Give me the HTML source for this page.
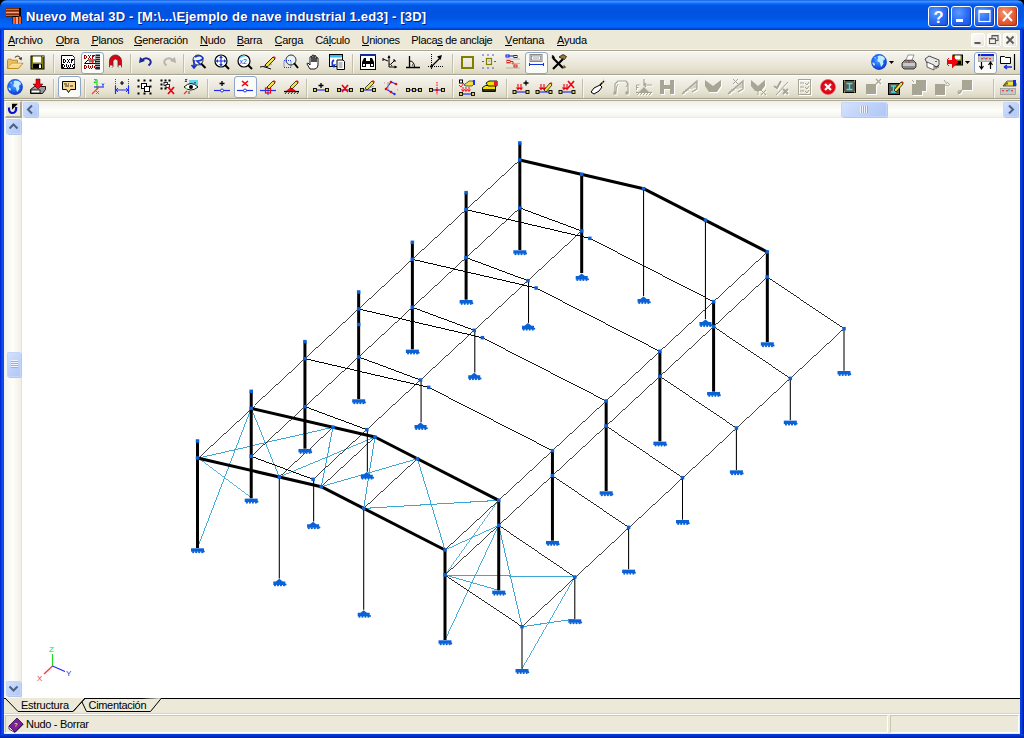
<!DOCTYPE html>
<html><head><meta charset="utf-8">
<style>
*{margin:0;padding:0;box-sizing:border-box}
html,body{width:1024px;height:738px;overflow:hidden;background:#ECE9D8;font-family:"Liberation Sans",sans-serif;font-size:11px;color:#000}

.abs{position:absolute}
#title{left:0;top:0;width:1024px;height:30px;border-radius:7px 7px 0 0;
 background:linear-gradient(to bottom,#0A48DA 0px,#3D94FF 1px,#3A8DFF 2px,#1876FF 3px,#0963F4 4px,#005BE9 5px,#0055E3 7px,#0053DF 12px,#0054E1 17px,#0059E9 19px,#0061F4 22px,#0066FB 25px,#0064F8 27px,#0055E6 28px,#003DCB 29px,#003DCB 30px)}
#ttext{left:26px;top:9px;color:#fff;font-weight:bold;font-size:13px;white-space:nowrap;text-shadow:1px 1px 0 #0A1E8A;letter-spacing:0.18px}
.bord{background:linear-gradient(to right,#0019CF,#0841E8 40%,#0A55F5 75%,#0842E0)}
#menu{left:4px;top:30px;width:1016px;height:20px;background:#ECE9D8}
.mi{position:absolute;top:4px;white-space:nowrap;font-size:11px;letter-spacing:-0.3px}
.mi u{text-decoration:none;border-bottom:1px solid #000;line-height:10px;display:inline-block}
.tb{position:absolute;left:4px;width:1016px;background:linear-gradient(to bottom,#F6F5EF 0px,#F1EFE6 5px,#EBE8DA 11px,#E4E1CF 17px,#DAD6C2 21px,#D2CEBA 22px)}
.sep{position:absolute;width:2px;height:19px;border-left:1px solid #C2BFAD;border-right:1px solid #F6F5EF}
.btnp{position:absolute;width:23px;height:22px;border:1px solid #8FA6C8;border-radius:3px;background:#FBFBF8}
.ico{position:absolute;width:16px;height:16px;overflow:visible}
#canvas{left:22px;top:118px;width:998px;height:580px;background:#fff}
#vscroll{left:4px;top:117px;width:18px;height:581px;background:linear-gradient(to right,#F3F1EC,#FEFEFB 50%,#F1EFE6);border-right:1px solid #E6E3D6}
#hscroll{left:22px;top:101px;width:998px;height:17px;background:linear-gradient(to bottom,#EFEEE7,#F8F7F2 30%,#FEFEFB 55%,#F5F4EE 90%,#EAE8DD)}
.sbtn{position:absolute;width:15px;height:15px;border-radius:2px;background:linear-gradient(135deg,#D6E3FC,#BCD0F8 60%,#AFC6F5);box-shadow:inset 0 0 0 1px #C5D6FB,1px 1px 0 #B7C8E6}
#tabs{left:4px;top:698px;width:1016px;height:16px;background:#ECE9D8;border-top:1px solid #000}
#status{left:4px;top:714px;width:1016px;height:20px;background:#ECE9D8}

.tbtn{width:21px;height:21px;border:1px solid #fff;border-radius:3px;background:radial-gradient(circle at 35% 30%,#5C9CFF,#2A6AF4 50%,#1452E0);box-shadow:inset -1px -1px 1px #0A3AB8}
.tbtn svg{position:absolute;left:-1px;top:-1px}
.cls{background:radial-gradient(circle at 35% 30%,#F09A78,#E25A32 55%,#C8401E);box-shadow:inset -1px -1px 1px #A03010}
.mdib{width:14px;height:14px;border:1px solid #fff;border-radius:2px;background:linear-gradient(135deg,#FDFDFB,#F2F1EA 60%,#E5E3D8)}
.mdib svg{position:absolute;left:-1px;top:-1px}
.sbtn svg{position:absolute;left:0;top:0}
.spanel{border-top:1px solid #CBC7B6;border-left:1px solid #CBC7B6;border-bottom:1px solid #FFF;border-right:1px solid #FFF}
svg text{font-family:"Liberation Sans",sans-serif}
.thk{stroke:#000;stroke-width:3}
.thn{stroke:#000;stroke-width:1;shape-rendering:crispEdges}
.gry{stroke:#6E6E6E;stroke-width:2}
.gr2{stroke:#3A3A3A;stroke-width:1.4}
.gr3{stroke:#505050;stroke-width:1.5}
.col{stroke:#000;stroke-width:1.05}
.brc{stroke:#3AA6D6;stroke-width:1;shape-rendering:crispEdges}
.nd{fill:#0A62D6}
.bs{fill:#0A62D6}
</style></head><body>
<div class="abs bord" style="left:0;top:0;width:4px;height:738px"></div>
<div class="abs bord" style="left:1020px;top:0;width:4px;height:738px;background:linear-gradient(to right,#0842E0,#0A3CD8 40%,#0024B8 75%,#001A9C)"></div>
<div class="abs" style="left:0;top:734px;width:1024px;height:4px;background:linear-gradient(to bottom,#0842E0,#0030C8 50%,#001EA8)"></div>
<div class="abs" style="left:0;top:0;width:1024px;height:8px;background:#000"></div>
<div id="title" class="abs"></div>
<div id="ttext" class="abs">Nuevo Metal 3D - [M:\...\Ejemplo de nave industrial 1.ed3] - [3D]</div>
<div id="menu" class="abs">
<div class="mi" style="left:4.0px"><u>A</u>rchivo</div>
<div class="mi" style="left:51.7px"><u>O</u>bra</div>
<div class="mi" style="left:87.4px"><u>P</u>lanos</div>
<div class="mi" style="left:129.9px"><u>G</u>eneración</div>
<div class="mi" style="left:196.1px"><u>N</u>udo</div>
<div class="mi" style="left:232.7px"><u>B</u>arra</div>
<div class="mi" style="left:270.5px"><u>C</u>arga</div>
<div class="mi" style="left:311.2px">Cá<u>l</u>culo</div>
<div class="mi" style="left:357.5px"><u>U</u>niones</div>
<div class="mi" style="left:407.3px">Placa<u>s</u> de anclaje</div>
<div class="mi" style="left:501.1px"><u>V</u>entana</div>
<div class="mi" style="left:553.0px"><u>A</u>yuda</div>
</div>
<div class="abs" style="left:4px;top:49px;width:1016px;height:1px;background:#F5F4EE"></div>
<div class="abs" style="left:4px;top:50px;width:1016px;height:1px;background:#A8A592"></div>
<div class="abs" style="left:4px;top:51px;width:1016px;height:1px;background:#FFFFFF"></div>
<div class="tb" style="top:52px;height:22px"></div>
<div class="abs" style="left:4px;top:74px;width:1016px;height:1px;background:#A8A592"></div>
<div class="abs" style="left:4px;top:75px;width:1016px;height:1px;background:#FFFFFF"></div>
<div class="tb" style="top:76px;height:22px"></div>
<div class="abs" style="left:4px;top:98px;width:1016px;height:1px;background:#A8A592"></div>
<div class="abs" style="left:4px;top:99px;width:1016px;height:1px;background:#F0EEE5"></div>
<div class="abs" style="left:4px;top:100px;width:1016px;height:1px;background:#AEAA95"></div>
<div id="hscroll" class="abs"></div>
<div id="vscroll" class="abs"></div>
<div id="canvas" class="abs"></div>
<div id="tabs" class="abs"></div>
<div id="status" class="abs"></div>

<!-- title icon -->
<svg class="abs" style="left:6px;top:8px" width="16" height="16" viewBox="0 0 16 16">
<rect x="0" y="0" width="15" height="9" fill="#000"/>
<rect x="0" y="0.5" width="13" height="2" fill="#FF5A10"/><rect x="0" y="3.5" width="13" height="2" fill="#FFA080"/><rect x="0" y="6.5" width="13" height="1.8" fill="#FF5A10"/>
<rect x="6.5" y="8" width="9" height="8" fill="#000"/>
<rect x="7" y="9" width="2" height="7" fill="#FF5A10"/><rect x="9.5" y="9" width="2.5" height="7" fill="#FFA080"/><rect x="12.5" y="8.5" width="2.5" height="7.5" fill="#FF5A10"/>
</svg>
<!-- title buttons -->
<div class="abs tbtn" style="left:928px;top:6px"><svg width="21" height="21" viewBox="0 0 21 21"><text x="5.5" y="17" font-size="16.5" font-weight="bold" fill="#fff" font-family="Liberation Sans">?</text></svg></div>
<div class="abs tbtn" style="left:951px;top:6px"><svg width="21" height="21" viewBox="0 0 21 21"><rect x="5" y="13" width="7" height="3" fill="#fff"/></svg></div>
<div class="abs tbtn" style="left:974px;top:6px"><svg width="21" height="21" viewBox="0 0 21 21"><rect x="5" y="4.5" width="11" height="11" fill="none" stroke="#fff" stroke-width="1.2"/><rect x="5" y="4" width="11" height="3" fill="#fff"/></svg></div>
<div class="abs tbtn cls" style="left:997px;top:6px"><svg width="21" height="21" viewBox="0 0 21 21"><path d="M6 5l9 10M15 5l-9 10" stroke="#fff" stroke-width="2"/></svg></div>
<!-- mdi buttons -->
<div class="abs mdib" style="left:971px;top:33px"><svg width="14" height="14" viewBox="0 0 14 14"><rect x="3.5" y="9" width="6" height="2" fill="#5A5A5A"/></svg></div>
<div class="abs mdib" style="left:987px;top:33px"><svg width="14" height="14" viewBox="0 0 14 14"><rect x="5" y="2.5" width="6" height="5" fill="none" stroke="#5A5A5A" stroke-width="1.1"/><rect x="2.5" y="5.5" width="6" height="5" fill="#F2F1E9" stroke="#5A5A5A" stroke-width="1.1"/><rect x="5" y="2" width="6" height="1.4" fill="#5A5A5A"/><rect x="2.5" y="5" width="6" height="1.4" fill="#5A5A5A"/></svg></div>
<div class="abs mdib" style="left:1003px;top:33px"><svg width="14" height="14" viewBox="0 0 14 14"><path d="M3.5 3.5l7 7M10.5 3.5l-7 7" stroke="#5A5A5A" stroke-width="1.8"/></svg></div>
<!-- corner button -->
<div class="abs" style="left:5px;top:101px;width:17px;height:17px;background:#ECE9D8;border-right:2px solid #ACA899;border-bottom:2px solid #ACA899;border-top:1px solid #FFF;border-left:1px solid #FFF"></div>
<svg class="abs" style="left:4px;top:100px" width="20" height="20" viewBox="0 0 20 20"><path d="M5 7.5Q4.6 13 8.6 13Q12.4 13 12.2 7" fill="none" stroke="#0010D8" stroke-width="2.2"/><path d="M8 3.8H13.9L8 9.8Z" fill="#000"/></svg>
<!-- scroll buttons -->
<div class="sbtn" style="left:23px;top:102px"><svg width="15" height="15" viewBox="0 0 15 15"><path d="M9 3.5l-4 4l4 4" fill="none" stroke="#4D6185" stroke-width="2"/></svg></div>
<div class="sbtn" style="left:1003px;top:102px"><svg width="15" height="15" viewBox="0 0 15 15"><path d="M6 3.5l4 4l-4 4" fill="none" stroke="#4D6185" stroke-width="2"/></svg></div>
<div class="sbtn" style="left:841px;top:102px;width:46px"><svg width="46" height="15" viewBox="0 0 46 15"><path d="M19.5 4v7M21.5 4v7M23.5 4v7M25.5 4v7" stroke="#EEF3FD" stroke-width="1"/><path d="M20.5 4v7M22.5 4v7M24.5 4v7M26.5 4v7" stroke="#8FB0F0" stroke-width="1"/></svg></div>
<div class="sbtn" style="left:6px;top:119px"><svg width="15" height="15" viewBox="0 0 15 15"><path d="M3.5 9.5l4-4l4 4" fill="none" stroke="#4D6185" stroke-width="2"/></svg></div>
<div class="sbtn" style="left:6px;top:681px"><svg width="15" height="15" viewBox="0 0 15 15"><path d="M3.5 5.5l4 4l4-4" fill="none" stroke="#4D6185" stroke-width="2"/></svg></div>
<div class="sbtn" style="left:7px;top:352px;width:14px;height:25px"><svg width="14" height="25" viewBox="0 0 14 25"><path d="M4 8.5h7M4 10.5h7M4 12.5h7M4 14.5h7" stroke="#EEF3FD"/><path d="M4 9.5h7M4 11.5h7M4 13.5h7M4 15.5h7" stroke="#8FB0F0"/></svg></div>
<!-- tabs -->
<svg class="abs" style="left:4px;top:697px" width="200" height="17" viewBox="0 0 200 17">
<path d="M1 1l13 13.5h55l12-13.5" fill="#ECE9D8" stroke="#000" stroke-width="1"/>
<path d="M78 5l4.5 9.5h64l11-13.5" fill="#ECE9D8" stroke="#000" stroke-width="1"/>
<path d="M69 14.5l12.5-13.5" fill="none" stroke="#000" stroke-width="1"/>
<text x="17" y="12" font-size="11" fill="#000" font-family="Liberation Sans" textLength="48">Estructura</text>
<text x="84.5" y="12" font-size="11" fill="#000" font-family="Liberation Sans" textLength="58">Cimentación</text>
</svg>
<!-- status bar -->
<div class="abs" style="left:4px;top:713px;width:1016px;height:1px;background:#D8D4C4"></div>
<div class="abs" style="left:4px;top:714px;width:1016px;height:1px;background:#FFFFFF"></div>
<div class="abs spanel" style="left:5px;top:715px;width:883px;height:18px"></div>
<div class="abs spanel" style="left:890px;top:715px;width:129px;height:18px"></div>
<svg class="abs" style="left:8px;top:717px" width="16" height="16" viewBox="0 0 16 16">
<path d="M1 9l8-8l6 6l-8 8z" fill="#7A1E9A" stroke="#2A0040" stroke-width="0.8"/>
<path d="M1 9v3l6 3.5l8-8v-0.5l-8 8z" fill="#fff" stroke="#2A0040" stroke-width="0.8"/>
<text x="6" y="9.5" font-size="6" font-weight="bold" fill="#F0E040" font-family="Liberation Sans">?</text>
</svg>
<div class="abs" style="left:26px;top:718px;font-size:11px;letter-spacing:-0.3px;white-space:nowrap">Nudo - Borrar</div>

<svg class="ico" style="left:7px;top:54px;width:16px;height:16px" viewBox="0 0 16 16"><path d="M0.5 14.5V6.2l0.8-1h2.8l0.8 1h5.5v8.3z" fill="#E8C060" stroke="#C08A20" stroke-width="1"/><path d="M0.8 14.5l4.2-5.2h11l-4.6 5.2z" fill="#F8DC88" stroke="#C08A20" stroke-width="1"/><path d="M1.5 13.5l3.8-3.5h9" fill="none" stroke="#FFF2C0" stroke-width="0.8"/><path d="M8 3.5q2.5-3 5 0" fill="none" stroke="#4A3010" stroke-width="1.1"/><path d="M11.5 4.5l3.5-1.5l-0.5 3.5z" fill="#4A3010"/></svg>
<svg class="ico" style="left:30px;top:54px;width:16px;height:16px" viewBox="0 0 16 16"><rect x="0.5" y="1.5" width="14" height="14" fill="#000"/><rect x="1.5" y="2.5" width="12" height="12" fill="#808000"/><rect x="3" y="2.5" width="8" height="6" fill="#fff"/><rect x="3" y="10" width="9" height="4.5" fill="#000"/><rect x="9" y="10.5" width="2" height="3.5" fill="#fff"/><rect x="12.5" y="2" width="1" height="1" fill="#fff"/></svg>
<div class="sep" style="left:53px;top:54px"></div>
<svg class="ico" style="left:61px;top:54px;width:16px;height:16px" viewBox="0 0 16 16"><path d="M0.5 1.5h11l2 2v11h-13z" fill="#fff" stroke="#000"/><path d="M13.5 3.5v11" stroke="#555" stroke-width="1"/><g fill="#000"><rect x="2.00" y="5.00" width="1.00" height="1.00"/><rect x="3.00" y="5.00" width="1.00" height="1.00"/><rect x="2.00" y="6.00" width="1.00" height="1.00"/><rect x="4.00" y="6.00" width="1.00" height="1.00"/><rect x="2.00" y="7.00" width="1.00" height="1.00"/><rect x="4.00" y="7.00" width="1.00" height="1.00"/><rect x="2.00" y="8.00" width="1.00" height="1.00"/><rect x="3.00" y="8.00" width="1.00" height="1.00"/><rect x="6.00" y="5.00" width="1.00" height="1.00"/><rect x="8.00" y="5.00" width="1.00" height="1.00"/><rect x="7.00" y="6.00" width="1.00" height="1.00"/><rect x="7.00" y="7.00" width="1.00" height="1.00"/><rect x="6.00" y="8.00" width="1.00" height="1.00"/><rect x="8.00" y="8.00" width="1.00" height="1.00"/><rect x="10.00" y="5.00" width="1.00" height="1.00"/><rect x="11.00" y="5.00" width="1.00" height="1.00"/><rect x="12.00" y="5.00" width="1.00" height="1.00"/><rect x="10.00" y="6.00" width="1.00" height="1.00"/><rect x="11.00" y="6.00" width="1.00" height="1.00"/><rect x="10.00" y="7.00" width="1.00" height="1.00"/><rect x="10.00" y="8.00" width="1.00" height="1.00"/></g><g fill="#000"><rect x="1.00" y="10.00" width="1.00" height="1.00"/><rect x="2.00" y="10.00" width="1.00" height="1.00"/><rect x="1.00" y="11.00" width="1.00" height="1.00"/><rect x="3.00" y="11.00" width="1.00" height="1.00"/><rect x="1.00" y="12.00" width="1.00" height="1.00"/><rect x="3.00" y="12.00" width="1.00" height="1.00"/><rect x="1.00" y="13.00" width="1.00" height="1.00"/><rect x="2.00" y="13.00" width="1.00" height="1.00"/><rect x="5.00" y="10.00" width="1.00" height="1.00"/><rect x="9.00" y="10.00" width="1.00" height="1.00"/><rect x="5.00" y="11.00" width="1.00" height="1.00"/><rect x="7.00" y="11.00" width="1.00" height="1.00"/><rect x="9.00" y="11.00" width="1.00" height="1.00"/><rect x="5.00" y="12.00" width="1.00" height="1.00"/><rect x="7.00" y="12.00" width="1.00" height="1.00"/><rect x="9.00" y="12.00" width="1.00" height="1.00"/><rect x="6.00" y="13.00" width="1.00" height="1.00"/><rect x="8.00" y="13.00" width="1.00" height="1.00"/><rect x="12.00" y="10.00" width="1.00" height="1.00"/><rect x="13.00" y="10.00" width="1.00" height="1.00"/><rect x="11.00" y="11.00" width="1.00" height="1.00"/><rect x="11.00" y="12.00" width="1.00" height="1.00"/><rect x="13.00" y="12.00" width="1.00" height="1.00"/><rect x="12.00" y="13.00" width="1.00" height="1.00"/><rect x="13.00" y="13.00" width="1.00" height="1.00"/></g></svg>
<div class="btnp" style="left:81px;top:52px"></div>
<svg class="ico" style="left:84px;top:54px;width:16px;height:16px" viewBox="0 0 16 16"><g fill="#A00000"><rect x="0.00" y="1.00" width="1.00" height="1.00"/><rect x="1.00" y="1.00" width="1.00" height="1.00"/><rect x="0.00" y="2.00" width="1.00" height="1.00"/><rect x="2.00" y="2.00" width="1.00" height="1.00"/><rect x="0.00" y="3.00" width="1.00" height="1.00"/><rect x="2.00" y="3.00" width="1.00" height="1.00"/><rect x="0.00" y="4.00" width="1.00" height="1.00"/><rect x="1.00" y="4.00" width="1.00" height="1.00"/><rect x="4.00" y="1.00" width="1.00" height="1.00"/><rect x="6.00" y="1.00" width="1.00" height="1.00"/><rect x="5.00" y="2.00" width="1.00" height="1.00"/><rect x="5.00" y="3.00" width="1.00" height="1.00"/><rect x="4.00" y="4.00" width="1.00" height="1.00"/><rect x="6.00" y="4.00" width="1.00" height="1.00"/><rect x="8.00" y="1.00" width="1.00" height="1.00"/><rect x="9.00" y="1.00" width="1.00" height="1.00"/><rect x="10.00" y="1.00" width="1.00" height="1.00"/><rect x="8.00" y="2.00" width="1.00" height="1.00"/><rect x="9.00" y="2.00" width="1.00" height="1.00"/><rect x="8.00" y="3.00" width="1.00" height="1.00"/><rect x="8.00" y="4.00" width="1.00" height="1.00"/></g><g fill="#A00000"><rect x="0.00" y="11.00" width="1.00" height="1.00"/><rect x="1.00" y="11.00" width="1.00" height="1.00"/><rect x="0.00" y="12.00" width="1.00" height="1.00"/><rect x="2.00" y="12.00" width="1.00" height="1.00"/><rect x="0.00" y="13.00" width="1.00" height="1.00"/><rect x="2.00" y="13.00" width="1.00" height="1.00"/><rect x="0.00" y="14.00" width="1.00" height="1.00"/><rect x="1.00" y="14.00" width="1.00" height="1.00"/><rect x="4.00" y="11.00" width="1.00" height="1.00"/><rect x="8.00" y="11.00" width="1.00" height="1.00"/><rect x="4.00" y="12.00" width="1.00" height="1.00"/><rect x="6.00" y="12.00" width="1.00" height="1.00"/><rect x="8.00" y="12.00" width="1.00" height="1.00"/><rect x="4.00" y="13.00" width="1.00" height="1.00"/><rect x="6.00" y="13.00" width="1.00" height="1.00"/><rect x="8.00" y="13.00" width="1.00" height="1.00"/><rect x="5.00" y="14.00" width="1.00" height="1.00"/><rect x="7.00" y="14.00" width="1.00" height="1.00"/><rect x="11.00" y="11.00" width="1.00" height="1.00"/><rect x="12.00" y="11.00" width="1.00" height="1.00"/><rect x="10.00" y="12.00" width="1.00" height="1.00"/><rect x="10.00" y="13.00" width="1.00" height="1.00"/><rect x="12.00" y="13.00" width="1.00" height="1.00"/><rect x="11.00" y="14.00" width="1.00" height="1.00"/><rect x="12.00" y="14.00" width="1.00" height="1.00"/></g><path d="M0.5 9.5l3.5-3.5h7.5v3.5z" fill="#fff" stroke="#000"/><path d="M5 7.8h4.5M8 6.5l1.5 1.3l-1.5 1.3" stroke="#E00" stroke-width="1" fill="none"/><rect x="11.5" y="0.5" width="4.5" height="15" fill="#222"/><path d="M11.5 2.5h4.5M11.5 4.5h4.5M11.5 6.5h4.5M11.5 8.5h4.5M11.5 10.5h4.5M11.5 12.5h4.5" stroke="#C8C8C8" stroke-width="0.8"/></svg>
<svg class="ico" style="left:108px;top:54px;width:16px;height:16px" viewBox="0 0 16 16"><path d="M1.5 13V7a6 6 0 0 1 12 0v6h-3.5V7.5a2.5 2.5 0 0 0-5 0V13z" fill="#E00010" stroke="#333" stroke-width="0.8"/><rect x="2" y="11.5" width="2.5" height="2" fill="#fff"/><rect x="10.5" y="11.5" width="2.5" height="2" fill="#fff"/></svg>
<div class="sep" style="left:130px;top:54px"></div>
<svg class="ico" style="left:138px;top:54px;width:16px;height:16px" viewBox="0 0 16 16"><path d="M3.5 6.5q4-4 8 -1q3 3 -1 6" fill="none" stroke="#1A2A9A" stroke-width="2"/><path d="M1 9l1-6l5 4z" fill="#1A2A9A"/></svg>
<svg class="ico" style="left:161px;top:54px;width:16px;height:16px" viewBox="0 0 16 16"><path d="M12.5 6.5q-4-4 -8 -1q-3 3 1 6" fill="none" stroke="#B8B4A8" stroke-width="2"/><path d="M15 9l-1-6l-5 4z" fill="#B8B4A8"/></svg>
<div class="sep" style="left:183px;top:54px"></div>
<svg class="ico" style="left:191px;top:54px;width:16px;height:16px" viewBox="0 0 16 16"><circle cx="7" cy="6" r="5" fill="#E8F4FA" stroke="#333"/><path d="M10 9.5l4.5 4.5" stroke="#000" stroke-width="2"/><path d="M4 3q6-3 8 1q-1 3-6 3l4 4" fill="none" stroke="#1430C8" stroke-width="1.6"/><path d="M3 6v8M0.5 11l2.5 3l2.5-3" fill="none" stroke="#1430C8" stroke-width="1.6"/></svg>
<svg class="ico" style="left:214px;top:54px;width:16px;height:16px" viewBox="0 0 16 16"><circle cx="7" cy="7" r="6" fill="#fff" stroke="#000" stroke-width="1.2"/><path d="M11 11l4 4" stroke="#000" stroke-width="2"/><path d="M7 2v10M2 7h10" stroke="#1838D8" stroke-width="1.2"/><path d="M7 2l-2 2h4zM7 12l-2-2h4zM2 7l2-2v4zM12 7l-2-2v4z" fill="#1838D8"/></svg>
<svg class="ico" style="left:237px;top:54px;width:16px;height:16px" viewBox="0 0 16 16"><circle cx="7" cy="7" r="6" fill="#fff" stroke="#000" stroke-width="1.2"/><path d="M11 11l4 4" stroke="#000" stroke-width="2"/><path d="M3 4a5 5 0 0 1 5-2" stroke="#5AD8F0" stroke-width="1.5" fill="none"/><text x="2.5" y="10" font-size="7" fill="#1838D8" font-family="Liberation Sans">x2</text></svg>
<svg class="ico" style="left:260px;top:54px;width:16px;height:16px" viewBox="0 0 16 16"><path d="M5 11l8-8l2 2l-8 8z" fill="#F0E040" stroke="#000" stroke-width="0.8"/><path d="M13 3l1-1l2 2l-1 1z" fill="#E02020"/><path d="M5 11l-1 2l2-1z" fill="#000"/><path d="M0 13q3-1 5 0q3 1 6 2" fill="none" stroke="#000" stroke-width="1"/><path d="M8 12l4-2" stroke="#999" stroke-width="1"/></svg>
<svg class="ico" style="left:283px;top:54px;width:16px;height:16px" viewBox="0 0 16 16"><circle cx="8" cy="6" r="5" fill="#E8F4FA" stroke="#333"/><path d="M11 9l4 5" stroke="#000" stroke-width="2"/><rect x="1" y="6.5" width="7" height="7" fill="none" stroke="#2040E0" stroke-dasharray="1 1"/></svg>
<svg class="ico" style="left:306px;top:54px;width:16px;height:16px" viewBox="0 0 16 16"><path d="M4 15l-3-5q0-1 1-1l2 2V3q1-1 2 0v5V1.5q1-1 2 0V8V2q1-1 2 0v6V4q1-1 2 0v7q0 3-3 4z" fill="#fff" stroke="#000" stroke-width="0.9"/></svg>
<svg class="ico" style="left:329px;top:54px;width:16px;height:16px" viewBox="0 0 16 16"><rect x="0.5" y="0.5" width="13" height="12" fill="#fff" stroke="#000"/><rect x="1" y="1" width="12" height="2.5" fill="#3AC0E8"/><path d="M8 6h6l1.5 1.5v8h-7.5z" fill="#fff" stroke="#000"/><path d="M9.5 9h4M9.5 11h4M9.5 13h4" stroke="#444" stroke-width="0.7"/><path d="M5 6q-3 2 -1 6" fill="none" stroke="#1030D0" stroke-width="1.6"/><path d="M2 11l3 3l2-4z" fill="#1030D0"/></svg>
<div class="sep" style="left:352px;top:54px"></div>
<svg class="ico" style="left:360px;top:54px;width:16px;height:16px" viewBox="0 0 16 16"><rect x="0.5" y="0.5" width="15" height="15" fill="#fff" stroke="#000"/><rect x="0" y="0" width="16" height="2" fill="#1030A0"/><path d="M2 13v-5l2-4h2v3h4v-3h2l2 4v5h-4v-3h-4v3z" fill="#000"/><rect x="3" y="10" width="2" height="2" fill="#fff"/><rect x="11" y="10" width="2" height="2" fill="#fff"/></svg>
<svg class="ico" style="left:382px;top:54px;width:16px;height:16px" viewBox="0 0 16 16"><path d="M7 2v11h7" fill="none" stroke="#000" stroke-width="1"/><path d="M5.5 4l1.5-3l1.5 3zM12.5 11.5l3 1.5l-3 1.5z" fill="#000"/><path d="M6 7l-5-2M1 4v3" stroke="#000" stroke-width="1" fill="none"/><path d="M9 10l4-4M11 6h2v2" stroke="#000" stroke-width="1" fill="none"/><path d="M7 10q2 0 3 2" fill="none" stroke="#000" stroke-width="0.8"/></svg>
<svg class="ico" style="left:406px;top:54px;width:16px;height:16px" viewBox="0 0 16 16"><path d="M0 13.5h14M3.5 13.5V2" stroke="#000" stroke-width="1.3" fill="none"/><path d="M3.5 7q5 0 5 6.5" fill="none" stroke="#000" stroke-width="1"/><rect x="6" y="10.5" width="1" height="1" fill="#000"/></svg>
<svg class="ico" style="left:428px;top:54px;width:16px;height:16px" viewBox="0 0 16 16"><path d="M3.5 0v16M0 12.5h16" stroke="#000" stroke-width="1" stroke-dasharray="1 1"/><path d="M3.5 12.5l9-9" stroke="#000" stroke-width="1.2"/><path d="M14 1l-5 1.5l3.5 3.5z" fill="#000"/><circle cx="3.5" cy="12.5" r="1.3" fill="#000"/></svg>
<div class="sep" style="left:452px;top:54px"></div>
<svg class="ico" style="left:459px;top:54px;width:16px;height:16px" viewBox="0 0 16 16"><rect x="3" y="3" width="11" height="11" fill="none" stroke="#808000" stroke-width="2"/></svg>
<svg class="ico" style="left:482px;top:54px;width:16px;height:16px" viewBox="0 0 16 16"><path d="M0 1h2M5 1h2M10 1h2M0 7.5h2M12 7.5h2M0 14h2M5 14h2M10 14h2" stroke="#4040E0" stroke-width="0.9"/><rect x="4.5" y="4.5" width="5" height="6" fill="none" stroke="#808000" stroke-width="1.2"/><rect x="6.5" y="6.5" width="1" height="1" fill="#4040E0"/></svg>
<svg class="ico" style="left:505px;top:54px;width:16px;height:16px" viewBox="0 0 16 16"><rect x="1" y="1" width="3" height="2" fill="none" stroke="#0020E0"/><rect x="9" y="1.5" width="3" height="2" fill="none" stroke="#0020E0"/><path d="M4 2h5" stroke="#0020E0"/><path d="M1 5h14M1 9.5h14M1 14h14" stroke="#999" stroke-width="0.6"/><rect x="2" y="6.5" width="3" height="2" fill="none" stroke="#E02020"/><path d="M5 7.5h3v3" fill="none" stroke="#E02020"/><rect x="9" y="11" width="3" height="2" fill="none" stroke="#E02020"/></svg>
<div class="btnp" style="left:525px;top:52px"></div>
<svg class="ico" style="left:529px;top:54px;width:16px;height:16px" viewBox="0 0 16 16"><rect x="1" y="0.5" width="12" height="7" fill="#DDD" stroke="#888"/><rect x="2.5" y="2" width="9" height="4" fill="#fff" stroke="#666" stroke-width="0.6"/><path d="M4 4h6" stroke="#666" stroke-width="0.6"/><path d="M0.5 10.5h14M0.5 9v3M14.5 9v3" stroke="#1030D8" stroke-width="1"/></svg>
<svg class="ico" style="left:551px;top:54px;width:16px;height:16px" viewBox="0 0 16 16"><path d="M2 15l10-10" stroke="#000" stroke-width="2.2"/><path d="M2 4l10 10" stroke="#000" stroke-width="2.2"/><path d="M12 14l2-1l-1.5-1.5" fill="none" stroke="#8a4a20" stroke-width="1.5"/><path d="M1 1.5l2.5 2.5M1 4l2-2" stroke="#000" stroke-width="1.4"/><path d="M8 3l4-2.5l3.5 2l-2 3l-1.5-0.5z" fill="#A07830" stroke="#000" stroke-width="0.7"/></svg>
<svg class="ico" style="left:871px;top:54px;width:16px;height:16px" viewBox="0 0 16 16"><defs><radialGradient id="gl" cx="0.45" cy="0.4" r="0.65"><stop offset="0" stop-color="#58A8FF"/><stop offset="0.55" stop-color="#1C64F0"/><stop offset="1" stop-color="#0830C0"/></radialGradient></defs><circle cx="8" cy="8" r="7.9" fill="url(#gl)"/><path d="M6.5 2.2l2-0.8l3 0.5l2 1.5l0.5 2l-1.5 0.5l-0.5 2l0.5 1.5l-1.5 2.5l-1 1l-0.5-2l-0.7-2.5l-2-0.8l-0.5-1.5l1-1.5z" fill="#C0ECFF"/><path d="M1.2 8.5l1.6 0.2l1.2 1.3l-0.3 1.5l-1.4-0.3z" fill="#C0ECFF"/><path d="M3 3.5l1.2-0.6l0.8 1l-0.8 0.8z" fill="#A8DCFF"/></svg>
<svg class="ico" style="left:889px;top:61px;width:5px;height:3px" viewBox="0 0 5 3"><path d="M0 0h5l-2.5 3z" fill="#000"/></svg>
<svg class="ico" style="left:901px;top:54px;width:16px;height:16px" viewBox="0 0 16 16"><path d="M1 9l3-3h8l3 3v4l-2 2h-10l-2-2z" fill="#8a8a8a" stroke="#222" stroke-width="0.8"/><path d="M2 9h12v3h-12z" fill="#C8C8C8"/><path d="M5 6l2-5h6l-2 5z" fill="#fff" stroke="#555" stroke-width="0.6"/><rect x="4" y="7" width="2" height="1" fill="#20C020"/><rect x="7" y="7.5" width="2" height="1" fill="#E02020"/></svg>
<svg class="ico" style="left:924px;top:54px;width:16px;height:16px" viewBox="0 0 16 16"><path d="M1 5l4-3l10 4v5l-2 2l-10-4z" fill="#E8E8E8" stroke="#222" stroke-width="0.8"/><path d="M3 8v5l7 3v-5z" fill="#fff" stroke="#222" stroke-width="0.7"/><rect x="11" y="7" width="2" height="1" fill="#20A020"/><path d="M12 12v3M14 11v3" stroke="#222" stroke-width="0.8"/></svg>
<svg class="ico" style="left:947px;top:54px;width:16px;height:16px" viewBox="0 0 16 16"><rect x="5.5" y="0.5" width="10.5" height="11" fill="#000"/><rect x="6.5" y="1.5" width="8.5" height="9" fill="#808000"/><rect x="8" y="1.5" width="5.5" height="4" fill="#fff"/><rect x="8" y="7" width="6" height="3.5" fill="#000"/><path d="M0 6h5V1.5l6.5 6.5l-6.5 6.5V10H0z" fill="#F00010"/><path d="M0 5.5h1M0 10.5h1M1 4.5h1M1 11.5h1" stroke="#F00010" stroke-width="1"/></svg>
<svg class="ico" style="left:965px;top:61px;width:5px;height:3px" viewBox="0 0 5 3"><path d="M0 0h5l-2.5 3z" fill="#000"/></svg>
<div class="btnp" style="left:974px;top:52px"></div>
<svg class="ico" style="left:978px;top:54px;width:16px;height:16px" viewBox="0 0 16 16"><rect x="0.5" y="0.5" width="15" height="7" fill="#C8C8C8" stroke="#888" stroke-width="0.6"/><rect x="0" y="0" width="16" height="2" fill="#1020E0"/><rect x="2" y="0.5" width="1" height="1" fill="#fff"/><path d="M3 4l1 2l1-2zM7 4l1 2l1-2zM11 4l1 2l1-2z" fill="#E02020"/><path d="M5 4h2M9 4h1" stroke="#20A0E0"/><path d="M3.5 8v6M1.5 12l2 3l2-3M12.5 15v-6M10.5 11l2-3l2 3" fill="none" stroke="#000" stroke-width="1.2"/></svg>
<svg class="ico" style="left:1000px;top:54px;width:16px;height:16px" viewBox="0 0 16 16"><path d="M0.5 9.5v-7h4l1 1h5v6z" fill="#fff" stroke="#000"/><path d="M14.5 0v16" stroke="#000" stroke-width="1.2"/><path d="M4 13h8M4 13l3-2M4 13l3 2" stroke="#1030E0" stroke-width="1.3" fill="none"/></svg>
<svg class="ico" style="left:7px;top:79px;width:16px;height:16px" viewBox="0 0 16 16"><defs><radialGradient id="gl2" cx="0.45" cy="0.4" r="0.65"><stop offset="0" stop-color="#58A8FF"/><stop offset="0.55" stop-color="#1C64F0"/><stop offset="1" stop-color="#0830C0"/></radialGradient></defs><circle cx="8" cy="8" r="7.9" fill="url(#gl2)"/><path d="M6.5 2.2l2-0.8l3 0.5l2 1.5l0.5 2l-1.5 0.5l-0.5 2l0.5 1.5l-1.5 2.5l-1 1l-0.5-2l-0.7-2.5l-2-0.8l-0.5-1.5l1-1.5z" fill="#C0ECFF"/><path d="M1.2 8.5l1.6 0.2l1.2 1.3l-0.3 1.5l-1.4-0.3z" fill="#C0ECFF"/><path d="M3 3.5l1.2-0.6l0.8 1l-0.8 0.8z" fill="#A8DCFF"/></svg>
<svg class="ico" style="left:30px;top:79px;width:16px;height:16px" viewBox="0 0 16 16"><path d="M0.5 10.5l4-3h11v3l-3 4h-12z" fill="#9A9A9A" stroke="#000" stroke-width="0.9"/><rect x="1" y="11" width="9" height="3" fill="#fff" stroke="#000" stroke-width="0.8"/><path d="M6 0h4v5h3l-5 5l-5-5h3z" fill="#F00010" stroke="#300" stroke-width="0.5"/></svg>
<div class="sep" style="left:53px;top:79px"></div>
<div class="btnp" style="left:58px;top:76px"></div>
<svg class="ico" style="left:61px;top:79px;width:16px;height:16px" viewBox="0 0 16 16"><path d="M1.5 2.5h13v8h-5l-2 3l-2-3h-4z" fill="#F8D890" stroke="#000"/><path d="M3 5h3M7 5h1M4 7h4M9 7h3" stroke="#000" stroke-width="0.8"/></svg>
<div class="sep" style="left:84px;top:79px"></div>
<svg class="ico" style="left:92px;top:79px;width:16px;height:16px" viewBox="0 0 16 16"><path d="M5 0.5v10" stroke="#10E010" stroke-width="1.2"/><path d="M2 0.5h2.5l-2.5 3h2.5" fill="none" stroke="#10E010" stroke-width="1"/><path d="M2 8h10" stroke="#2040F0" stroke-width="1.2"/><path d="M10 4.5l1 1.5l1-1.5M11 6v1.5" fill="none" stroke="#2040F0"/><path d="M0 15l7-7" stroke="#F04040" stroke-width="1.2"/><path d="M4 12l3 3M7 12l-3 3" stroke="#F04040" stroke-width="0.9"/></svg>
<svg class="ico" style="left:114px;top:79px;width:16px;height:16px" viewBox="0 0 16 16"><path d="M1.5 0v15M14.5 0v15" stroke="#C02020" stroke-width="1" stroke-dasharray="1 1"/><path d="M1.5 7v8M14.5 7v8M1.5 11h13" stroke="#2030F0" stroke-width="1.2"/><path d="M4 9l-2 2l2 2M12 9l2 2l-2 2" fill="none" stroke="#2030F0"/><path d="M8 2v4M6 4h4" stroke="#000" stroke-width="1.2"/></svg>
<svg class="ico" style="left:137px;top:79px;width:16px;height:16px" viewBox="0 0 16 16"><path d="M0.5 1.5h2M6.5 1.5h2M12.5 1.5h2M0.5 7.5h2M12.5 7.5h2M0.5 14.5h2M6.5 14.5h2M12.5 14.5h2" stroke="#000" stroke-width="2"/><rect x="4.5" y="4.5" width="5" height="5" fill="#fff" stroke="#000"/><rect x="7.5" y="7.5" width="5" height="5" fill="#fff" stroke="#000"/></svg>
<svg class="ico" style="left:160px;top:79px;width:16px;height:16px" viewBox="0 0 16 16"><path d="M0.5 1.5h2M4.5 1.5h2M8.5 1.5h2M0.5 5.5h2M0.5 9.5h2M4.5 9.5h2" stroke="#000" stroke-width="2"/><rect x="4" y="3.5" width="3.5" height="3" fill="#fff" stroke="#000" stroke-width="0.8"/><rect x="6" y="5.5" width="3.5" height="3" fill="#fff" stroke="#000" stroke-width="0.8"/><path d="M8 8l6 7M14 8l-6 7" stroke="#F00010" stroke-width="1.8"/></svg>
<svg class="ico" style="left:183px;top:79px;width:16px;height:16px" viewBox="0 0 16 16"><path d="M6 1l9 0v8h-9z" fill="#60D8E8"/><path d="M1 8q7-7 14 0q-7 6 -14 0z" fill="#fff" stroke="#000" stroke-width="0.9"/><circle cx="8" cy="8" r="2" fill="#000"/><path d="M2 0.5h2l-2 2h2" fill="none" stroke="#000" stroke-width="0.7"/><path d="M11 3l1 1l1-1M12 4v1" fill="none" stroke="#203080" stroke-width="0.7"/><path d="M1 15l3-3" stroke="#F03030" stroke-width="1.2"/><path d="M5 12l2 3M7 12l-2 3" stroke="#555" stroke-width="0.7"/><path d="M4 10l-2-2" stroke="#60E060"/></svg>
<div class="sep" style="left:207px;top:79px"></div>
<svg class="ico" style="left:214px;top:79px;width:16px;height:16px" viewBox="0 0 16 16"><path d="M0 11.5h16" stroke="#2030F0" stroke-width="1.2"/><circle cx="8" cy="11.5" r="1.5" fill="#fff" stroke="#2030F0"/><path d="M8 2v5M5.5 4.5h5" stroke="#000" stroke-width="1.3"/></svg>
<div class="btnp" style="left:234px;top:76px"></div>
<svg class="ico" style="left:237px;top:79px;width:16px;height:16px" viewBox="0 0 16 16"><path d="M0 11.5h16" stroke="#2030F0" stroke-width="1.2"/><circle cx="8" cy="11.5" r="1.5" fill="#fff" stroke="#2030F0"/><path d="M5 2l6 5M11 2l-6 5" stroke="#F00010" stroke-width="1.6"/></svg>
<svg class="ico" style="left:260px;top:79px;width:16px;height:16px" viewBox="0 0 16 16"><path d="M0 11.5h16" stroke="#2030F0" stroke-width="1.2"/><path d="M8 7v9" stroke="#2030F0" stroke-width="1"/><rect x="5.5" y="9" width="5" height="5" fill="none" stroke="#F00010" stroke-width="1.2"/><path d="M7 8l6-6l2 2l-6 6z" fill="#F0E040" stroke="#000" stroke-width="0.7"/><path d="M13 2l1-1l2 2l-1 1z" fill="#E02020"/></svg>
<svg class="ico" style="left:283px;top:79px;width:16px;height:16px" viewBox="0 0 16 16"><path d="M1 12.5h15" stroke="#000" stroke-width="1.2"/><path d="M2 15l1.5-2M5 15l1.5-2M8 15l1.5-2M11 15l1.5-2M14 15l1.5-2" stroke="#000" stroke-width="0.8"/><path d="M3 12l5-4l5 4z" fill="#F00010"/><path d="M7 8l6-6l2 2l-6 6z" fill="#F0E040" stroke="#000" stroke-width="0.7"/><path d="M13 2l1-1l2 2l-1 1z" fill="#E02020"/></svg>
<div class="sep" style="left:306px;top:79px"></div>
<svg class="ico" style="left:313px;top:79px;width:16px;height:16px" viewBox="0 0 16 16"><path d="M2 11h12" stroke="#2030F0" stroke-width="1.2"/><rect x="0.5" y="9.5" width="3" height="3" fill="#E0D040" stroke="#000" stroke-width="0.9"/><rect x="12.5" y="9.5" width="3" height="3" fill="#E0D040" stroke="#000" stroke-width="0.9"/><path d="M8 4v5M5.5 6.5h5" stroke="#000" stroke-width="1.3"/></svg>
<svg class="ico" style="left:337px;top:79px;width:16px;height:16px" viewBox="0 0 16 16"><path d="M2 11h12" stroke="#2030F0" stroke-width="1.2"/><rect x="0.5" y="9.5" width="3" height="3" fill="#E0D040" stroke="#000" stroke-width="0.9"/><rect x="12.5" y="9.5" width="3" height="3" fill="#E0D040" stroke="#000" stroke-width="0.9"/><path d="M5 6l6 7M11 6l-6 7" stroke="#F00010" stroke-width="1.6"/></svg>
<svg class="ico" style="left:360px;top:79px;width:16px;height:16px" viewBox="0 0 16 16"><path d="M2 11h12" stroke="#2030F0" stroke-width="1.2"/><rect x="0.5" y="9.5" width="3" height="3" fill="#E0D040" stroke="#000" stroke-width="0.9"/><rect x="12.5" y="9.5" width="3" height="3" fill="#E0D040" stroke="#000" stroke-width="0.9"/><path d="M5 9l7-7l2 2l-7 7z" fill="#F0E040" stroke="#000" stroke-width="0.7"/><path d="M12 2l1-1l2 2l-1 1z" fill="#E02020"/><path d="M9 9l5-2" stroke="#999"/></svg>
<svg class="ico" style="left:383px;top:79px;width:16px;height:16px" viewBox="0 0 16 16"><path d="M3 10l5-7l5 2M3 10l5 3l3 2" fill="none" stroke="#2030F0" stroke-width="1.2"/><circle cx="3" cy="10" r="1.3" fill="#F00010"/><circle cx="8" cy="3" r="1.3" fill="#F00010"/><circle cx="13" cy="5" r="1.3" fill="#F00010"/><circle cx="8" cy="13" r="1.3" fill="#F00010"/><circle cx="11.5" cy="15" r="1.2" fill="#2030F0"/><path d="M5 3v8" stroke="#999"/><path d="M1 4h0.5M14 11h0.5" stroke="#F00010"/></svg>
<svg class="ico" style="left:406px;top:79px;width:16px;height:16px" viewBox="0 0 16 16"><path d="M2 11h12" stroke="#2030F0" stroke-width="1.2"/><rect x="0.5" y="9.5" width="3" height="3" fill="#E0D040" stroke="#000" stroke-width="0.9"/><rect x="6.5" y="9.5" width="3" height="3" fill="#E0D040" stroke="#000" stroke-width="0.9"/><rect x="12.5" y="9.5" width="3" height="3" fill="#E0D040" stroke="#000" stroke-width="0.9"/></svg>
<svg class="ico" style="left:429px;top:79px;width:16px;height:16px" viewBox="0 0 16 16"><path d="M2 11h12" stroke="#2030F0" stroke-width="1.2"/><rect x="0.5" y="9.5" width="3" height="3" fill="#E0D040" stroke="#000" stroke-width="0.9"/><rect x="12.5" y="9.5" width="3" height="3" fill="#E0D040" stroke="#000" stroke-width="0.9"/><path d="M8 3v13" stroke="#F00010" stroke-width="1" stroke-dasharray="1.5 1"/><circle cx="8" cy="11" r="1.5" fill="#F00010"/></svg>
<div class="sep" style="left:452px;top:79px"></div>
<svg class="ico" style="left:459px;top:79px;width:16px;height:16px" viewBox="0 0 16 16"><path d="M2 15h12" stroke="#2030F0" stroke-width="1.2"/><rect x="0.5" y="13.5" width="3" height="3" fill="#E0D040" stroke="#000" stroke-width="0.9"/><rect x="12.5" y="13.5" width="3" height="3" fill="#E0D040" stroke="#000" stroke-width="0.9"/><path d="M4 8v4M7 8v4M10 8v4M2.5 10.5l1.5 2l1.5-2M5.5 10.5l1.5 2l1.5-2M8.5 10.5l1.5 2l1.5-2" fill="none" stroke="#F00010" stroke-width="0.9"/><path d="M5 6l5-4h4l1 3l-2 2h-6z" fill="#F0E040" stroke="#000" stroke-width="0.6"/><rect x="0.5" y="1" width="3" height="3" fill="#fff" stroke="#000"/><path d="M0 6l2 2l3-4" stroke="#E02020" fill="none"/><rect x="14" y="1" width="2" height="5" fill="#2030F0"/></svg>
<svg class="ico" style="left:482px;top:79px;width:16px;height:16px" viewBox="0 0 16 16"><path d="M0.5 12.5v-4l3-2h10v6z" fill="#F0E000" stroke="#000" stroke-width="0.9"/><path d="M4 4l3-2h8v5h-9z" fill="#F0E000" stroke="#000" stroke-width="0.9"/><rect x="12" y="2" width="3.5" height="5" fill="#E02020"/><rect x="1" y="10" width="12" height="2.5" fill="#000" opacity="0.8"/></svg>
<div class="sep" style="left:506px;top:79px"></div>
<svg class="ico" style="left:513px;top:79px;width:16px;height:16px" viewBox="0 0 16 16"><path d="M1.5 13h13" stroke="#2030F0" stroke-width="1.2"/><rect x="0" y="11.5" width="3" height="3" fill="#E0D040" stroke="#000" stroke-width="0.9"/><rect x="13" y="11.5" width="3" height="3" fill="#E0D040" stroke="#000" stroke-width="0.9"/><path d="M5 5v5M8 5v5M3.5 8.5l1.5 2l1.5-2M6.5 8.5l1.5 2l1.5-2" fill="none" stroke="#F00010" stroke-width="1.1"/><path d="M13 1.5v5M10.5 4h5" stroke="#000" stroke-width="1.3"/></svg>
<svg class="ico" style="left:536px;top:79px;width:16px;height:16px" viewBox="0 0 16 16"><path d="M1.5 13h13" stroke="#2030F0" stroke-width="1.2"/><rect x="0" y="11.5" width="3" height="3" fill="#E0D040" stroke="#000" stroke-width="0.9"/><rect x="13" y="11.5" width="3" height="3" fill="#E0D040" stroke="#000" stroke-width="0.9"/><path d="M5 5v5M8 5v5M3.5 8.5l1.5 2l1.5-2M6.5 8.5l1.5 2l1.5-2" fill="none" stroke="#F00010" stroke-width="1.1"/><path d="M8 11l6-7l2 2l-6 7z" fill="#F0E040" stroke="#000" stroke-width="0.7"/><path d="M14 4l1-1l1.5 1.5l-1 1z" fill="#E02020"/></svg>
<svg class="ico" style="left:559px;top:79px;width:16px;height:16px" viewBox="0 0 16 16"><path d="M1.5 13h13" stroke="#2030F0" stroke-width="1.2"/><rect x="0" y="11.5" width="3" height="3" fill="#E0D040" stroke="#000" stroke-width="0.9"/><rect x="13" y="11.5" width="3" height="3" fill="#E0D040" stroke="#000" stroke-width="0.9"/><path d="M5 5v5M8 5v5M3.5 8.5l1.5 2l1.5-2M6.5 8.5l1.5 2l1.5-2" fill="none" stroke="#F00010" stroke-width="1.1"/><path d="M9 2l6 7M15 2l-6 7" stroke="#F00010" stroke-width="1.6"/></svg>
<div class="sep" style="left:582px;top:79px"></div>
<svg class="ico" style="left:590px;top:79px;width:16px;height:16px" viewBox="0 0 16 16"><path d="M1 13l3-4l6-3l2 2l-3 4l-5 3z" fill="#fff" stroke="#000" stroke-width="1"/><path d="M10 6l4-4" stroke="#000" stroke-width="1.4"/><path d="M13 0h1M15 2h1M12 3h1M15 5h1" stroke="#F0E040" stroke-width="1.2"/></svg>
<svg class="ico" style="left:613px;top:79px;width:16px;height:16px" viewBox="0 0 16 16"><g transform="translate(1,1)"><path d="M2 14V5l3-3h8l2 3v9" fill="none" stroke="#FFFFFF" stroke-width="1.2"/><path d="M13 2l2 3l-2 3" fill="none" stroke="#FFFFFF"/><rect x="0.5" y="12.5" width="3" height="3" fill="#FFFFFF"/><rect x="12.5" y="12.5" width="3" height="3" fill="#FFFFFF"/><path d="M5 5q-2 2 -2 8" fill="none" stroke="#FFFFFF"/></g><path d="M2 14V5l3-3h8l2 3v9" fill="none" stroke="#A8A594" stroke-width="1.2"/><path d="M13 2l2 3l-2 3" fill="none" stroke="#A8A594"/><rect x="0.5" y="12.5" width="3" height="3" fill="#A8A594"/><rect x="12.5" y="12.5" width="3" height="3" fill="#A8A594"/><path d="M5 5q-2 2 -2 8" fill="none" stroke="#A8A594"/></svg>
<svg class="ico" style="left:636px;top:79px;width:16px;height:16px" viewBox="0 0 16 16"><g transform="translate(1,1)"><path d="M0 13.5h16" stroke="#FFFFFF" stroke-width="1.2"/><path d="M1 16l2-2M4 16l2-2M7 16l2-2M10 16l2-2M13 16l2-2" stroke="#FFFFFF"/><path d="M3 13l5-5l5 5z" fill="#FFFFFF"/><path d="M8 0v7M16 6h-7M10 4l-2 2l2 2" fill="none" stroke="#FFFFFF" stroke-width="1.2"/><path d="M0.5 6h3M0.5 6v5M0.5 8.5h2" stroke="#FFFFFF"/></g><path d="M0 13.5h16" stroke="#A8A594" stroke-width="1.2"/><path d="M1 16l2-2M4 16l2-2M7 16l2-2M10 16l2-2M13 16l2-2" stroke="#A8A594"/><path d="M3 13l5-5l5 5z" fill="#A8A594"/><path d="M8 0v7M16 6h-7M10 4l-2 2l2 2" fill="none" stroke="#A8A594" stroke-width="1.2"/><path d="M0.5 6h3M0.5 6v5M0.5 8.5h2" stroke="#A8A594"/></svg>
<svg class="ico" style="left:659px;top:79px;width:16px;height:16px" viewBox="0 0 16 16"><g transform="translate(1,1)"><path d="M1 1h4v5h6v-5h4v14h-4v-5h-6v5h-4z" fill="#FFFFFF"/></g><path d="M1 1h4v5h6v-5h4v14h-4v-5h-6v5h-4z" fill="#A8A594"/></svg>
<svg class="ico" style="left:682px;top:79px;width:16px;height:16px" viewBox="0 0 16 16"><g transform="translate(1,1)"><path d="M0 15l15-13v8l-5 3" fill="none" stroke="#FFFFFF" stroke-width="1.3"/><path d="M2 12v3M4 10v3M6 9v3M8 7v3M10 6v4M12 4v5M14 3v6" stroke="#FFFFFF" stroke-width="0.9"/></g><path d="M0 15l15-13v8l-5 3" fill="none" stroke="#A8A594" stroke-width="1.3"/><path d="M2 12v3M4 10v3M6 9v3M8 7v3M10 6v4M12 4v5M14 3v6" stroke="#A8A594" stroke-width="0.9"/></svg>
<svg class="ico" style="left:705px;top:79px;width:16px;height:16px" viewBox="0 0 16 16"><g transform="translate(1,1)"><path d="M0 1l8 6l8-6v6l-4 6h-8l-4-6z" fill="#FFFFFF"/></g><path d="M0 1l8 6l8-6v6l-4 6h-8l-4-6z" fill="#A8A594"/></svg>
<svg class="ico" style="left:728px;top:79px;width:16px;height:16px" viewBox="0 0 16 16"><g transform="translate(1,1)"><path d="M0 15l15-13v8l-5 3" fill="none" stroke="#FFFFFF" stroke-width="1.3"/><path d="M2 12v3M4 10v3M6 9v3M8 7v3M10 6v4M12 4v5M14 3v6" stroke="#FFFFFF" stroke-width="0.9"/><path d="M5 0l5 5M10 0l-5 5" stroke="#FFFFFF"/></g><path d="M0 15l15-13v8l-5 3" fill="none" stroke="#A8A594" stroke-width="1.3"/><path d="M2 12v3M4 10v3M6 9v3M8 7v3M10 6v4M12 4v5M14 3v6" stroke="#A8A594" stroke-width="0.9"/><path d="M5 0l5 5M10 0l-5 5" stroke="#A8A594"/></svg>
<svg class="ico" style="left:751px;top:79px;width:16px;height:16px" viewBox="0 0 16 16"><g transform="translate(1,1)"><path d="M0 1l7 6l7-6v6l-4 5h-6l-4-5z" fill="#FFFFFF"/><path d="M7 10v6M5 12h3" stroke="#FFFFFF"/><path d="M10 11l5 5M15 11l-5 5" stroke="#FFFFFF"/></g><path d="M0 1l7 6l7-6v6l-4 5h-6l-4-5z" fill="#A8A594"/><path d="M7 10v6M5 12h3" stroke="#A8A594"/><path d="M10 11l5 5M15 11l-5 5" stroke="#A8A594"/></svg>
<svg class="ico" style="left:774px;top:79px;width:16px;height:16px" viewBox="0 0 16 16"><g transform="translate(1,1)"><path d="M0 7l3 2l4-7" fill="none" stroke="#FFFFFF" stroke-width="2"/><path d="M2 16l12-13" stroke="#FFFFFF" stroke-width="1"/><path d="M9 10l5 5M14 10l-5 5" stroke="#FFFFFF" stroke-width="2"/></g><path d="M0 7l3 2l4-7" fill="none" stroke="#A8A594" stroke-width="2"/><path d="M2 16l12-13" stroke="#A8A594" stroke-width="1"/><path d="M9 10l5 5M14 10l-5 5" stroke="#A8A594" stroke-width="2"/></svg>
<svg class="ico" style="left:797px;top:79px;width:16px;height:16px" viewBox="0 0 16 16"><g transform="translate(1,1)"><rect x="1.5" y="0.5" width="12" height="15" fill="none" stroke="#FFFFFF"/><path d="M3 4h4M3 8h4M3 12h4M8 4l2 2l2-3M8 8l2 2l2-3M8 12l2 2l2-3" fill="none" stroke="#FFFFFF"/></g><rect x="1.5" y="0.5" width="12" height="15" fill="none" stroke="#A8A594"/><path d="M3 4h4M3 8h4M3 12h4M8 4l2 2l2-3M8 8l2 2l2-3M8 12l2 2l2-3" fill="none" stroke="#A8A594"/></svg>
<svg class="ico" style="left:820px;top:79px;width:16px;height:16px" viewBox="0 0 16 16"><circle cx="8" cy="8" r="7.5" fill="#D80010" stroke="#F06070" stroke-width="0.8"/><circle cx="8" cy="8" r="5.5" fill="#E0101C"/><path d="M5 5l6 6M11 5l-6 6" stroke="#fff" stroke-width="2.2"/></svg>
<svg class="ico" style="left:843px;top:79px;width:16px;height:16px" viewBox="0 0 16 16"><rect x="0.5" y="1.5" width="12" height="12" fill="#5A5A50" stroke="#000"/><path d="M3.5 4.5h6M3.5 10.5h6M6.5 4.5v6" stroke="#30E8F0" stroke-width="1.4"/><path d="M1 2h1M11 2h1M1 13h1M11 13h1" stroke="#E0E040"/></svg>
<svg class="ico" style="left:865px;top:79px;width:16px;height:16px" viewBox="0 0 16 16"><g transform="translate(1,1)"><rect x="1" y="5" width="10" height="10" fill="#FFFFFF"/><path d="M11 0l5 5M16 0l-5 5" stroke="#FFFFFF" stroke-width="1.2"/></g><rect x="1" y="5" width="10" height="10" fill="#A8A594"/><path d="M11 0l5 5M16 0l-5 5" stroke="#A8A594" stroke-width="1.2"/></svg>
<svg class="ico" style="left:888px;top:79px;width:16px;height:16px" viewBox="0 0 16 16"><rect x="0.5" y="4.5" width="11" height="11" fill="#5A5A50" stroke="#000"/><path d="M3 7h5M3 13h5M5.5 7v6" stroke="#30E8F0" stroke-width="1.4"/><path d="M6 11l7-8l2 2l-7 8z" fill="#F0E040" stroke="#000" stroke-width="0.7"/><path d="M13 3l1-1l2 2l-1 1z" fill="#E02020"/></svg>
<svg class="ico" style="left:911px;top:79px;width:16px;height:16px" viewBox="0 0 16 16"><g transform="translate(1,1)"><rect x="1" y="5" width="10" height="11" fill="#FFFFFF"/><rect x="5" y="1" width="10" height="11" fill="#FFFFFF"/><path d="M1 1l2 2" stroke="#FFFFFF"/></g><rect x="1" y="5" width="10" height="11" fill="#A8A594"/><rect x="5" y="1" width="10" height="11" fill="#A8A594"/><path d="M1 1l2 2" stroke="#A8A594"/></svg>
<svg class="ico" style="left:934px;top:79px;width:16px;height:16px" viewBox="0 0 16 16"><g transform="translate(1,1)"><rect x="1" y="5" width="10" height="11" fill="#FFFFFF"/><path d="M10 1l3 4M13 3l3 3M11 6l4 1" stroke="#FFFFFF"/></g><rect x="1" y="5" width="10" height="11" fill="#A8A594"/><path d="M10 1l3 4M13 3l3 3M11 6l4 1" stroke="#A8A594"/></svg>
<svg class="ico" style="left:957px;top:79px;width:16px;height:16px" viewBox="0 0 16 16"><g transform="translate(1,1)"><rect x="5" y="1" width="10" height="10" fill="#FFFFFF"/><path d="M1 15l4-4" stroke="#FFFFFF" stroke-width="1.3"/><circle cx="2.5" cy="13" r="1.5" fill="none" stroke="#FFFFFF"/></g><rect x="5" y="1" width="10" height="10" fill="#A8A594"/><path d="M1 15l4-4" stroke="#A8A594" stroke-width="1.3"/><circle cx="2.5" cy="13" r="1.5" fill="none" stroke="#A8A594"/></svg>
<div class="sep" style="left:993px;top:79px"></div>
<svg class="ico" style="left:1000px;top:79px;width:16px;height:16px" viewBox="0 0 16 16"><path d="M3 7l4-5h6l3 2v3z" fill="#F0E040" stroke="#000" stroke-width="0.6"/><path d="M4 6h2M6 4h2M5 5h3" stroke="#000" stroke-width="0.6"/><rect x="13" y="1" width="3" height="6" fill="#1030E0"/><rect x="0.5" y="9.5" width="15" height="6" fill="#C8C8C8" stroke="#888" stroke-width="0.6"/><path d="M2 11l1 2l1-2zM6 11l1 2l1-2zM11 11l1 2l1-2z" fill="#E02020"/><path d="M8 11h2" stroke="#20A0E0"/></svg>
<svg class="abs" style="left:0;top:0" width="1024" height="738" viewBox="0 0 1024 738">
<defs><clipPath id="cv"><rect x="22" y="118" width="998" height="580"/></clipPath></defs>
<g clip-path="url(#cv)">
<line class="brc" x1="197.5" y1="458" x2="333.02" y2="427.3" style="stroke-width:0.995"/>
<line class="brc" x1="251.22" y1="408.33" x2="279.3" y2="476.97" style="stroke-width:0.944"/>
<line class="brc" x1="279.3" y1="476.97" x2="374.97" y2="437.03" style="stroke-width:0.941"/>
<line class="brc" x1="333.02" y1="427.3" x2="321.25" y2="486.7" style="stroke-width:1.001"/>
<line class="brc" x1="321.25" y1="486.7" x2="417.42" y2="458.74" style="stroke-width:0.979"/>
<line class="brc" x1="374.97" y1="437.03" x2="363.7" y2="508.41" style="stroke-width:1.008"/>
<line class="brc" x1="363.7" y1="508.41" x2="498.72" y2="500.33" style="stroke-width:1.018"/>
<line class="brc" x1="417.42" y1="458.74" x2="445" y2="550" style="stroke-width:0.976"/>
<line class="brc" x1="197.5" y1="458" x2="251.22" y2="498.33" style="stroke-width:0.816"/>
<line class="brc" x1="251.22" y1="408.33" x2="197.5" y2="548" style="stroke-width:0.952"/>
<line class="brc" x1="445" y1="550" x2="498.72" y2="525.33" style="stroke-width:0.927"/>
<line class="brc" x1="498.72" y1="500.33" x2="445" y2="575" style="stroke-width:0.828"/>
<line class="brc" x1="445" y1="575" x2="498.72" y2="590.33" style="stroke-width:0.981"/>
<line class="brc" x1="498.72" y1="525.33" x2="445" y2="640" style="stroke-width:0.924"/>
<line class="brc" x1="445" y1="575" x2="574.8" y2="577.03" style="stroke-width:1.020"/>
<line class="brc" x1="498.72" y1="525.33" x2="522" y2="626.7" style="stroke-width:0.994"/>
<line class="brc" x1="522" y1="626.7" x2="574.8" y2="619.03" style="stroke-width:1.009"/>
<line class="brc" x1="574.8" y1="577.03" x2="522" y2="668.7" style="stroke-width:0.884"/>
<line class="thn" x1="445" y1="575" x2="522" y2="626.7" style="stroke-width:0.847"/>
<line class="col" x1="522" y1="668.7" x2="522" y2="626.7"/>
<line class="thn" x1="498.72" y1="525.33" x2="574.8" y2="577.03" style="stroke-width:0.844"/>
<line class="col" x1="574.8" y1="619.03" x2="574.8" y2="577.03"/>
<line class="thn" x1="251.22" y1="456.33" x2="313.1" y2="479.33" style="stroke-width:0.956"/>
<line class="col" x1="313.64" y1="521.53" x2="313.64" y2="479.53"/>
<line class="thn" x1="304.94" y1="358.66" x2="428.69" y2="387.36" style="stroke-width:0.994"/>
<line class="thn" x1="428.69" y1="387.36" x2="552.44" y2="450.66" style="stroke-width:0.908"/>
<line class="thn" x1="552.44" y1="475.66" x2="628.6" y2="527.36" style="stroke-width:0.844"/>
<line class="col" x1="628.6" y1="569.36" x2="628.6" y2="527.36"/>
<line class="thn" x1="304.94" y1="406.66" x2="366.81" y2="429.66" style="stroke-width:0.956"/>
<line class="col" x1="367.36" y1="471.86" x2="367.36" y2="429.86"/>
<line class="thn" x1="358.66" y1="308.99" x2="482.41" y2="337.69" style="stroke-width:0.994"/>
<line class="thn" x1="482.41" y1="337.69" x2="606.16" y2="400.99" style="stroke-width:0.908"/>
<line class="thn" x1="606.16" y1="425.99" x2="682.5" y2="477.69" style="stroke-width:0.845"/>
<line class="col" x1="682.5" y1="519.69" x2="682.5" y2="477.69"/>
<line class="thn" x1="358.66" y1="356.99" x2="420.53" y2="379.99" style="stroke-width:0.956"/>
<line class="col" x1="421.08" y1="422.19" x2="421.08" y2="380.19"/>
<line class="thn" x1="412.38" y1="259.32" x2="536.13" y2="288.02" style="stroke-width:0.994"/>
<line class="thn" x1="536.13" y1="288.02" x2="659.88" y2="351.32" style="stroke-width:0.908"/>
<line class="thn" x1="659.88" y1="376.32" x2="736.4" y2="428.02" style="stroke-width:0.845"/>
<line class="col" x1="736.4" y1="470.02" x2="736.4" y2="428.02"/>
<line class="thn" x1="412.38" y1="307.32" x2="474.25" y2="330.32" style="stroke-width:0.956"/>
<line class="col" x1="474.8" y1="372.52" x2="474.8" y2="330.52"/>
<line class="thn" x1="466.1" y1="209.65" x2="589.85" y2="238.35" style="stroke-width:0.994"/>
<line class="thn" x1="589.85" y1="238.35" x2="713.6" y2="301.65" style="stroke-width:0.908"/>
<line class="thn" x1="713.6" y1="326.65" x2="790.3" y2="378.35" style="stroke-width:0.846"/>
<line class="col" x1="790.3" y1="420.35" x2="790.3" y2="378.35"/>
<line class="thn" x1="466.1" y1="257.65" x2="527.98" y2="280.65" style="stroke-width:0.956"/>
<line class="col" x1="528.52" y1="322.85" x2="528.52" y2="280.85"/>
<line class="thn" x1="767.32" y1="276.98" x2="844" y2="328.68" style="stroke-width:0.846"/>
<line class="col" x1="844" y1="370.68" x2="844" y2="328.68"/>
<line class="thn" x1="519.82" y1="207.98" x2="581.69" y2="230.98" style="stroke-width:0.956"/>
<line class="col" x1="279.3" y1="578.41" x2="279.3" y2="476.97"/>
<line class="col" x1="363.7" y1="609.78" x2="363.7" y2="508.41"/>
<line class="col" x1="643.57" y1="295.98" x2="643.57" y2="188.68"/>
<line class="col" x1="705.44" y1="318.98" x2="705.44" y2="220.33"/>
<line class="thn" x1="197.5" y1="458" x2="519.82" y2="159.98" style="stroke-width:0.749"/>
<line class="thn" x1="251.22" y1="456.33" x2="519.82" y2="207.98" style="stroke-width:0.749"/>
<line class="thn" x1="313.1" y1="479.33" x2="581.69" y2="230.98" style="stroke-width:0.749"/>
<line class="thn" x1="445" y1="550" x2="767.32" y2="251.98" style="stroke-width:0.749"/>
<line class="thn" x1="445" y1="575" x2="767.32" y2="276.98" style="stroke-width:0.749"/>
<line class="thn" x1="522" y1="626.7" x2="844" y2="328.68" style="stroke-width:0.749"/>
<line class="thn" x1="279.3" y1="476.97" x2="333.02" y2="427.3" style="stroke-width:0.749"/>
<line class="thn" x1="321.25" y1="486.7" x2="374.97" y2="437.03" style="stroke-width:0.749"/>
<line class="thn" x1="363.7" y1="508.41" x2="417.42" y2="458.74" style="stroke-width:0.749"/>
<line class="thk" x1="197.5" y1="548" x2="197.5" y2="441"/>
<line class="thk" x1="445" y1="640" x2="445" y2="550"/>
<line class="thk" x1="197.5" y1="458" x2="321.25" y2="486.7"/>
<line class="thk" x1="321.25" y1="486.7" x2="445" y2="550"/>
<line class="thk" x1="251.22" y1="498.33" x2="251.22" y2="391.33"/>
<line class="thk" x1="498.72" y1="590.33" x2="498.72" y2="500.33"/>
<line class="thk" x1="251.22" y1="408.33" x2="374.97" y2="437.03"/>
<line class="thk" x1="374.97" y1="437.03" x2="498.72" y2="500.33"/>
<line class="thk" x1="304.94" y1="448.66" x2="304.94" y2="341.66"/>
<line class="thk" x1="552.44" y1="540.66" x2="552.44" y2="450.66"/>
<line class="thk" x1="358.66" y1="398.99" x2="358.66" y2="291.99"/>
<line class="thk" x1="606.16" y1="490.99" x2="606.16" y2="400.99"/>
<line class="thk" x1="412.38" y1="349.32" x2="412.38" y2="242.32"/>
<line class="thk" x1="659.88" y1="441.32" x2="659.88" y2="351.32"/>
<line class="thk" x1="466.1" y1="299.65" x2="466.1" y2="192.65"/>
<line class="thk" x1="713.6" y1="391.65" x2="713.6" y2="301.65"/>
<line class="thk" x1="519.82" y1="249.98" x2="519.82" y2="142.98"/>
<line class="thk" x1="767.32" y1="341.98" x2="767.32" y2="251.98"/>
<line class="thk" x1="519.82" y1="159.98" x2="643.57" y2="188.68"/>
<line class="thk" x1="643.57" y1="188.68" x2="767.32" y2="251.98"/>
<line class="thk" x1="581.69" y1="272.98" x2="581.69" y2="174.33"/>
<path class="bs" d="M191 548.3h13v3.4h-13z"/>
<circle class="bs" cx="193.2" cy="552.2" r="1.1"/>
<circle class="bs" cx="196.2" cy="552.2" r="1.1"/>
<circle class="bs" cx="199.2" cy="552.2" r="1.1"/>
<circle class="bs" cx="202.2" cy="552.2" r="1.1"/>
<circle class="bs" cx="203.8" cy="551.5" r="1"/>
<path class="bs" d="M438.5 640.3h13v3.4h-13z"/>
<circle class="bs" cx="440.7" cy="644.2" r="1.1"/>
<circle class="bs" cx="443.7" cy="644.2" r="1.1"/>
<circle class="bs" cx="446.7" cy="644.2" r="1.1"/>
<circle class="bs" cx="449.7" cy="644.2" r="1.1"/>
<circle class="bs" cx="451.3" cy="643.5" r="1"/>
<path class="bs" d="M515.5 669h13v3.4h-13z"/>
<circle class="bs" cx="517.7" cy="672.9" r="1.1"/>
<circle class="bs" cx="520.7" cy="672.9" r="1.1"/>
<circle class="bs" cx="523.7" cy="672.9" r="1.1"/>
<circle class="bs" cx="526.7" cy="672.9" r="1.1"/>
<circle class="bs" cx="528.3" cy="672.2" r="1"/>
<path class="bs" d="M244.72 498.63h13v3.4h-13z"/>
<circle class="bs" cx="246.92" cy="502.53" r="1.1"/>
<circle class="bs" cx="249.92" cy="502.53" r="1.1"/>
<circle class="bs" cx="252.92" cy="502.53" r="1.1"/>
<circle class="bs" cx="255.92" cy="502.53" r="1.1"/>
<circle class="bs" cx="257.52" cy="501.83" r="1"/>
<path class="bs" d="M492.22 590.63h13v3.4h-13z"/>
<circle class="bs" cx="494.42" cy="594.53" r="1.1"/>
<circle class="bs" cx="497.42" cy="594.53" r="1.1"/>
<circle class="bs" cx="500.42" cy="594.53" r="1.1"/>
<circle class="bs" cx="503.42" cy="594.53" r="1.1"/>
<circle class="bs" cx="505.02" cy="593.83" r="1"/>
<path class="bs" d="M568.3 619.33h13v3.4h-13z"/>
<circle class="bs" cx="570.5" cy="623.23" r="1.1"/>
<circle class="bs" cx="573.5" cy="623.23" r="1.1"/>
<circle class="bs" cx="576.5" cy="623.23" r="1.1"/>
<circle class="bs" cx="579.5" cy="623.23" r="1.1"/>
<circle class="bs" cx="581.1" cy="622.53" r="1"/>
<path class="bs" d="M307.1 524.33h12v3.5h-12zM309.3 524.73L313.1 521.73L316.9 524.73z"/>
<circle class="bs" cx="308.8" cy="528.23" r="1.1"/>
<circle class="bs" cx="311.8" cy="528.23" r="1.1"/>
<circle class="bs" cx="314.8" cy="528.23" r="1.1"/>
<circle class="bs" cx="317.8" cy="528.23" r="1.1"/>
<circle class="bs" cx="319.4" cy="527.53" r="1"/>
<path class="bs" d="M298.44 448.96h13v3.4h-13z"/>
<circle class="bs" cx="300.64" cy="452.86" r="1.1"/>
<circle class="bs" cx="303.64" cy="452.86" r="1.1"/>
<circle class="bs" cx="306.64" cy="452.86" r="1.1"/>
<circle class="bs" cx="309.64" cy="452.86" r="1.1"/>
<circle class="bs" cx="311.24" cy="452.16" r="1"/>
<path class="bs" d="M545.94 540.96h13v3.4h-13z"/>
<circle class="bs" cx="548.14" cy="544.86" r="1.1"/>
<circle class="bs" cx="551.14" cy="544.86" r="1.1"/>
<circle class="bs" cx="554.14" cy="544.86" r="1.1"/>
<circle class="bs" cx="557.14" cy="544.86" r="1.1"/>
<circle class="bs" cx="558.74" cy="544.16" r="1"/>
<path class="bs" d="M622.1 569.66h13v3.4h-13z"/>
<circle class="bs" cx="624.3" cy="573.56" r="1.1"/>
<circle class="bs" cx="627.3" cy="573.56" r="1.1"/>
<circle class="bs" cx="630.3" cy="573.56" r="1.1"/>
<circle class="bs" cx="633.3" cy="573.56" r="1.1"/>
<circle class="bs" cx="634.9" cy="572.86" r="1"/>
<path class="bs" d="M360.81 474.66h12v3.5h-12zM363.01 475.06L366.81 472.06L370.62 475.06z"/>
<circle class="bs" cx="362.51" cy="478.56" r="1.1"/>
<circle class="bs" cx="365.51" cy="478.56" r="1.1"/>
<circle class="bs" cx="368.51" cy="478.56" r="1.1"/>
<circle class="bs" cx="371.51" cy="478.56" r="1.1"/>
<circle class="bs" cx="373.12" cy="477.86" r="1"/>
<path class="bs" d="M352.16 399.29h13v3.4h-13z"/>
<circle class="bs" cx="354.36" cy="403.19" r="1.1"/>
<circle class="bs" cx="357.36" cy="403.19" r="1.1"/>
<circle class="bs" cx="360.36" cy="403.19" r="1.1"/>
<circle class="bs" cx="363.36" cy="403.19" r="1.1"/>
<circle class="bs" cx="364.96" cy="402.49" r="1"/>
<path class="bs" d="M599.66 491.29h13v3.4h-13z"/>
<circle class="bs" cx="601.86" cy="495.19" r="1.1"/>
<circle class="bs" cx="604.86" cy="495.19" r="1.1"/>
<circle class="bs" cx="607.86" cy="495.19" r="1.1"/>
<circle class="bs" cx="610.86" cy="495.19" r="1.1"/>
<circle class="bs" cx="612.46" cy="494.49" r="1"/>
<path class="bs" d="M676 519.99h13v3.4h-13z"/>
<circle class="bs" cx="678.2" cy="523.89" r="1.1"/>
<circle class="bs" cx="681.2" cy="523.89" r="1.1"/>
<circle class="bs" cx="684.2" cy="523.89" r="1.1"/>
<circle class="bs" cx="687.2" cy="523.89" r="1.1"/>
<circle class="bs" cx="688.8" cy="523.19" r="1"/>
<path class="bs" d="M414.53 424.99h12v3.5h-12zM416.73 425.39L420.53 422.39L424.33 425.39z"/>
<circle class="bs" cx="416.23" cy="428.89" r="1.1"/>
<circle class="bs" cx="419.23" cy="428.89" r="1.1"/>
<circle class="bs" cx="422.23" cy="428.89" r="1.1"/>
<circle class="bs" cx="425.23" cy="428.89" r="1.1"/>
<circle class="bs" cx="426.83" cy="428.19" r="1"/>
<path class="bs" d="M405.88 349.62h13v3.4h-13z"/>
<circle class="bs" cx="408.08" cy="353.52" r="1.1"/>
<circle class="bs" cx="411.08" cy="353.52" r="1.1"/>
<circle class="bs" cx="414.08" cy="353.52" r="1.1"/>
<circle class="bs" cx="417.08" cy="353.52" r="1.1"/>
<circle class="bs" cx="418.68" cy="352.82" r="1"/>
<path class="bs" d="M653.38 441.62h13v3.4h-13z"/>
<circle class="bs" cx="655.58" cy="445.52" r="1.1"/>
<circle class="bs" cx="658.58" cy="445.52" r="1.1"/>
<circle class="bs" cx="661.58" cy="445.52" r="1.1"/>
<circle class="bs" cx="664.58" cy="445.52" r="1.1"/>
<circle class="bs" cx="666.18" cy="444.82" r="1"/>
<path class="bs" d="M729.9 470.32h13v3.4h-13z"/>
<circle class="bs" cx="732.1" cy="474.22" r="1.1"/>
<circle class="bs" cx="735.1" cy="474.22" r="1.1"/>
<circle class="bs" cx="738.1" cy="474.22" r="1.1"/>
<circle class="bs" cx="741.1" cy="474.22" r="1.1"/>
<circle class="bs" cx="742.7" cy="473.52" r="1"/>
<path class="bs" d="M468.25 375.32h12v3.5h-12zM470.45 375.72L474.25 372.72L478.06 375.72z"/>
<circle class="bs" cx="469.95" cy="379.22" r="1.1"/>
<circle class="bs" cx="472.95" cy="379.22" r="1.1"/>
<circle class="bs" cx="475.95" cy="379.22" r="1.1"/>
<circle class="bs" cx="478.95" cy="379.22" r="1.1"/>
<circle class="bs" cx="480.56" cy="378.52" r="1"/>
<path class="bs" d="M459.6 299.95h13v3.4h-13z"/>
<circle class="bs" cx="461.8" cy="303.85" r="1.1"/>
<circle class="bs" cx="464.8" cy="303.85" r="1.1"/>
<circle class="bs" cx="467.8" cy="303.85" r="1.1"/>
<circle class="bs" cx="470.8" cy="303.85" r="1.1"/>
<circle class="bs" cx="472.4" cy="303.15" r="1"/>
<path class="bs" d="M707.1 391.95h13v3.4h-13z"/>
<circle class="bs" cx="709.3" cy="395.85" r="1.1"/>
<circle class="bs" cx="712.3" cy="395.85" r="1.1"/>
<circle class="bs" cx="715.3" cy="395.85" r="1.1"/>
<circle class="bs" cx="718.3" cy="395.85" r="1.1"/>
<circle class="bs" cx="719.9" cy="395.15" r="1"/>
<path class="bs" d="M783.8 420.65h13v3.4h-13z"/>
<circle class="bs" cx="786" cy="424.55" r="1.1"/>
<circle class="bs" cx="789" cy="424.55" r="1.1"/>
<circle class="bs" cx="792" cy="424.55" r="1.1"/>
<circle class="bs" cx="795" cy="424.55" r="1.1"/>
<circle class="bs" cx="796.6" cy="423.85" r="1"/>
<path class="bs" d="M521.98 325.65h12v3.5h-12zM524.18 326.05L527.98 323.05L531.77 326.05z"/>
<circle class="bs" cx="523.68" cy="329.55" r="1.1"/>
<circle class="bs" cx="526.68" cy="329.55" r="1.1"/>
<circle class="bs" cx="529.68" cy="329.55" r="1.1"/>
<circle class="bs" cx="532.68" cy="329.55" r="1.1"/>
<circle class="bs" cx="534.27" cy="328.85" r="1"/>
<path class="bs" d="M513.32 250.28h13v3.4h-13z"/>
<circle class="bs" cx="515.52" cy="254.18" r="1.1"/>
<circle class="bs" cx="518.52" cy="254.18" r="1.1"/>
<circle class="bs" cx="521.52" cy="254.18" r="1.1"/>
<circle class="bs" cx="524.52" cy="254.18" r="1.1"/>
<circle class="bs" cx="526.12" cy="253.48" r="1"/>
<path class="bs" d="M760.82 342.28h13v3.4h-13z"/>
<circle class="bs" cx="763.02" cy="346.18" r="1.1"/>
<circle class="bs" cx="766.02" cy="346.18" r="1.1"/>
<circle class="bs" cx="769.02" cy="346.18" r="1.1"/>
<circle class="bs" cx="772.02" cy="346.18" r="1.1"/>
<circle class="bs" cx="773.62" cy="345.48" r="1"/>
<path class="bs" d="M837.5 370.98h13v3.4h-13z"/>
<circle class="bs" cx="839.7" cy="374.88" r="1.1"/>
<circle class="bs" cx="842.7" cy="374.88" r="1.1"/>
<circle class="bs" cx="845.7" cy="374.88" r="1.1"/>
<circle class="bs" cx="848.7" cy="374.88" r="1.1"/>
<circle class="bs" cx="850.3" cy="374.18" r="1"/>
<path class="bs" d="M273.3 581.41h12v3.5h-12zM275.5 581.81L279.3 578.81L283.1 581.81z"/>
<circle class="bs" cx="275" cy="585.31" r="1.1"/>
<circle class="bs" cx="278" cy="585.31" r="1.1"/>
<circle class="bs" cx="281" cy="585.31" r="1.1"/>
<circle class="bs" cx="284" cy="585.31" r="1.1"/>
<circle class="bs" cx="285.6" cy="584.61" r="1"/>
<path class="bs" d="M357.7 612.78h12v3.5h-12zM359.9 613.18L363.7 610.18L367.5 613.18z"/>
<circle class="bs" cx="359.4" cy="616.68" r="1.1"/>
<circle class="bs" cx="362.4" cy="616.68" r="1.1"/>
<circle class="bs" cx="365.4" cy="616.68" r="1.1"/>
<circle class="bs" cx="368.4" cy="616.68" r="1.1"/>
<circle class="bs" cx="370" cy="615.98" r="1"/>
<path class="bs" d="M575.69 275.98h12v3.5h-12zM577.89 276.38L581.69 273.38L585.49 276.38z"/>
<circle class="bs" cx="577.39" cy="279.88" r="1.1"/>
<circle class="bs" cx="580.39" cy="279.88" r="1.1"/>
<circle class="bs" cx="583.39" cy="279.88" r="1.1"/>
<circle class="bs" cx="586.39" cy="279.88" r="1.1"/>
<circle class="bs" cx="587.99" cy="279.18" r="1"/>
<path class="bs" d="M637.57 298.98h12v3.5h-12zM639.77 299.38L643.57 296.38L647.37 299.38z"/>
<circle class="bs" cx="639.27" cy="302.88" r="1.1"/>
<circle class="bs" cx="642.27" cy="302.88" r="1.1"/>
<circle class="bs" cx="645.27" cy="302.88" r="1.1"/>
<circle class="bs" cx="648.27" cy="302.88" r="1.1"/>
<circle class="bs" cx="649.87" cy="302.18" r="1"/>
<path class="bs" d="M699.44 321.98h12v3.5h-12zM701.64 322.38L705.44 319.38L709.24 322.38z"/>
<circle class="bs" cx="701.14" cy="325.88" r="1.1"/>
<circle class="bs" cx="704.14" cy="325.88" r="1.1"/>
<circle class="bs" cx="707.14" cy="325.88" r="1.1"/>
<circle class="bs" cx="710.14" cy="325.88" r="1.1"/>
<circle class="bs" cx="711.74" cy="325.18" r="1"/>
<rect class="nd" x="195.75" y="439.25" width="3.5" height="3.5"/>
<rect class="nd" x="195.75" y="456.25" width="3.5" height="3.5"/>
<rect class="nd" x="443.25" y="548.25" width="3.5" height="3.5"/>
<rect class="nd" x="443.25" y="573.25" width="3.5" height="3.5"/>
<rect class="nd" x="319.5" y="484.95" width="3.5" height="3.5"/>
<rect class="nd" x="520.25" y="624.95" width="3.5" height="3.5"/>
<rect class="nd" x="249.47" y="389.58" width="3.5" height="3.5"/>
<rect class="nd" x="249.47" y="406.58" width="3.5" height="3.5"/>
<rect class="nd" x="496.97" y="498.58" width="3.5" height="3.5"/>
<rect class="nd" x="496.97" y="523.58" width="3.5" height="3.5"/>
<rect class="nd" x="373.22" y="435.28" width="3.5" height="3.5"/>
<rect class="nd" x="573.05" y="575.28" width="3.5" height="3.5"/>
<rect class="nd" x="249.47" y="454.58" width="3.5" height="3.5"/>
<rect class="nd" x="311.35" y="477.58" width="3.5" height="3.5"/>
<rect class="nd" x="303.19" y="339.91" width="3.5" height="3.5"/>
<rect class="nd" x="303.19" y="356.91" width="3.5" height="3.5"/>
<rect class="nd" x="550.69" y="448.91" width="3.5" height="3.5"/>
<rect class="nd" x="550.69" y="473.91" width="3.5" height="3.5"/>
<rect class="nd" x="426.94" y="385.61" width="3.5" height="3.5"/>
<rect class="nd" x="626.85" y="525.61" width="3.5" height="3.5"/>
<rect class="nd" x="303.19" y="404.91" width="3.5" height="3.5"/>
<rect class="nd" x="365.06" y="427.91" width="3.5" height="3.5"/>
<rect class="nd" x="356.91" y="290.24" width="3.5" height="3.5"/>
<rect class="nd" x="356.91" y="307.24" width="3.5" height="3.5"/>
<rect class="nd" x="604.41" y="399.24" width="3.5" height="3.5"/>
<rect class="nd" x="604.41" y="424.24" width="3.5" height="3.5"/>
<rect class="nd" x="480.66" y="335.94" width="3.5" height="3.5"/>
<rect class="nd" x="680.75" y="475.94" width="3.5" height="3.5"/>
<rect class="nd" x="356.91" y="322.74" width="3.5" height="3.5"/>
<rect class="nd" x="356.91" y="355.24" width="3.5" height="3.5"/>
<rect class="nd" x="418.78" y="378.24" width="3.5" height="3.5"/>
<rect class="nd" x="410.63" y="240.57" width="3.5" height="3.5"/>
<rect class="nd" x="410.63" y="257.57" width="3.5" height="3.5"/>
<rect class="nd" x="658.13" y="349.57" width="3.5" height="3.5"/>
<rect class="nd" x="658.13" y="374.57" width="3.5" height="3.5"/>
<rect class="nd" x="534.38" y="286.27" width="3.5" height="3.5"/>
<rect class="nd" x="734.65" y="426.27" width="3.5" height="3.5"/>
<rect class="nd" x="410.63" y="305.57" width="3.5" height="3.5"/>
<rect class="nd" x="472.5" y="328.57" width="3.5" height="3.5"/>
<rect class="nd" x="464.35" y="190.9" width="3.5" height="3.5"/>
<rect class="nd" x="464.35" y="207.9" width="3.5" height="3.5"/>
<rect class="nd" x="711.85" y="299.9" width="3.5" height="3.5"/>
<rect class="nd" x="711.85" y="324.9" width="3.5" height="3.5"/>
<rect class="nd" x="588.1" y="236.6" width="3.5" height="3.5"/>
<rect class="nd" x="788.55" y="376.6" width="3.5" height="3.5"/>
<rect class="nd" x="464.35" y="255.9" width="3.5" height="3.5"/>
<rect class="nd" x="526.23" y="278.9" width="3.5" height="3.5"/>
<rect class="nd" x="518.07" y="141.23" width="3.5" height="3.5"/>
<rect class="nd" x="518.07" y="158.23" width="3.5" height="3.5"/>
<rect class="nd" x="765.57" y="250.23" width="3.5" height="3.5"/>
<rect class="nd" x="765.57" y="275.23" width="3.5" height="3.5"/>
<rect class="nd" x="641.82" y="186.93" width="3.5" height="3.5"/>
<rect class="nd" x="842.25" y="326.93" width="3.5" height="3.5"/>
<rect class="nd" x="518.07" y="206.23" width="3.5" height="3.5"/>
<rect class="nd" x="579.94" y="229.23" width="3.5" height="3.5"/>
<rect class="nd" x="277.55" y="475.22" width="3.5" height="3.5"/>
<rect class="nd" x="331.27" y="425.55" width="3.5" height="3.5"/>
<rect class="nd" x="361.95" y="506.66" width="3.5" height="3.5"/>
<rect class="nd" x="415.67" y="456.99" width="3.5" height="3.5"/>
<rect class="nd" x="579.94" y="172.58" width="3.5" height="3.5"/>
<rect class="nd" x="703.69" y="218.58" width="3.5" height="3.5"/>
<g stroke-width="1.2" fill="none">
<line x1="52.5" y1="666" x2="52.5" y2="654" stroke="#1DDC1D"/>
<line x1="52.5" y1="666" x2="44" y2="674" stroke="#FF3030"/>
<line x1="52.5" y1="666" x2="65" y2="671.5" stroke="#2424F0"/>
</g>
<text x="49" y="652" font-size="8" fill="#1DDC1D">Z</text>
<text x="37" y="680.5" font-size="8" fill="#FF3030">X</text>
<text x="66" y="675.5" font-size="8" fill="#2424F0">Y</text>
</g>
</svg>
</body></html>
